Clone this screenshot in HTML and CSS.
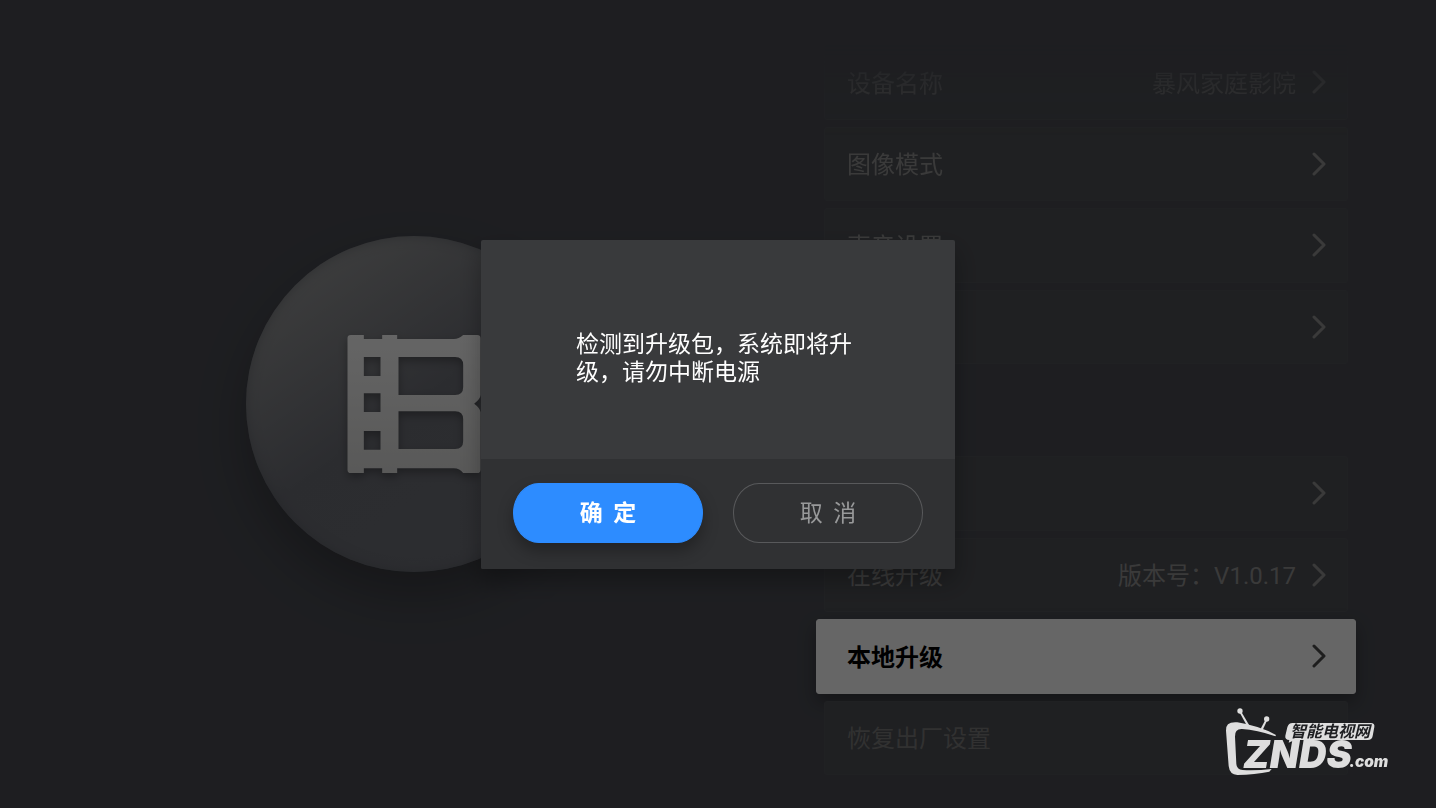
FILE: index.html
```html
<!DOCTYPE html>
<html lang="zh-CN">

<head>
    <meta charset="UTF-8">
    <meta name="viewport" content="width=device-width, initial-scale=1.0">
    <title>系统设置</title>
    <link rel="stylesheet" href="styles.css">
</head>

<body>
    <svg class="symbols" aria-hidden="true">
        <symbol id="arrow" viewBox="0 0 14 24">
            <path d="M2 2 L12 12 L2 22" fill="none" stroke="currentColor" stroke-width="3" stroke-linecap="round" stroke-linejoin="round"/>
        </symbol>
    </svg>

    <main class="screen">
        <div class="emblem-area">
            <div class="emblem">
                <svg class="emblem-icon" viewBox="51 48 399 414" aria-hidden="true">
                    <defs>
                        <linearGradient id="metal" x1="0" y1="0" x2="0" y2="1">
                            <stop offset="0" stop-color="#fcfcfc"/>
                            <stop offset="1" stop-color="#dededd"/>
                        </linearGradient>
                    </defs>
                    <path fill="url(#metal)" fill-rule="evenodd" d="M61 48H100V60H155V48H200V60H370Q385 60 398 48H440Q450 48 450 58V228Q450 240 431 254Q450 268 450 280V452Q450 462 440 462H398Q388 448 370 448H200V462H155V448H100V462H61Q51 462 51 452V58Q51 48 61 48Z
                        M100 114V171H150V114Z M100 223V279H150V223Z M100 336V392H150V336Z
                        M204 114V228H374Q398 228 398 204V138Q398 114 374 114Z
                        M204 277V390H374Q398 390 398 366V301Q398 277 374 277Z"/>
                </svg>
            </div>
        </div>

        <div class="settings">
            <div class="group">
                <button class="item"><span>设备名称</span><span class="value">暴风家庭影院</span><svg class="arrow"><use href="#arrow"/></svg></button>
                <button class="item"><span>图像模式</span><svg class="arrow"><use href="#arrow"/></svg></button>
                <button class="item"><span>声音设置</span><svg class="arrow"><use href="#arrow"/></svg></button>
                <button class="item" aria-label="更多"><svg class="arrow"><use href="#arrow"/></svg></button>
            </div>
            <div class="group">
                <button class="item" aria-label="更多"><svg class="arrow"><use href="#arrow"/></svg></button>
                <button class="item"><span>在线升级</span><span class="value">版本号：V1.0.17</span><svg class="arrow"><use href="#arrow"/></svg></button>
                <button class="item active"><span>本地升级</span><svg class="arrow"><use href="#arrow"/></svg></button>
                <button class="item last"><span>恢复出厂设置</span></button>
            </div>
        </div>
    </main>

    <div class="overlay">
        <div class="dialog" role="dialog" aria-modal="true" aria-labelledby="message">
            <div class="dialog-body">
                <p id="message">检测到升级包，系统即将升级，请勿中断电源</p>
            </div>
            <div class="dialog-footer">
                <button class="btn btn-ok">确&nbsp;&nbsp;定</button>
                <button class="btn btn-cancel">取&nbsp;&nbsp;消</button>
            </div>
        </div>
    </div>

    <svg class="watermark" viewBox="72 51 498 207" role="img" aria-label="智能电视网 ZNDS.com">
        <g fill="#dedede">
            <circle cx="120" cy="63" r="8"/>
            <circle cx="200" cy="87" r="8"/>
            <path d="M118 66L123 64L149 108L140 106Z"/>
            <path d="M197 88L202 90L189 118L182 116Z"/>
            <path d="M228 135Q180 108 112 97Q76 94 78 122L86 228Q89 254 112 255Q165 254 208 245L215 237Q170 242 128 240Q110 239 109 222L105 140Q104 116 126 117Q170 119 226 139Z"/>
            <path d="M278 99H512Q525 99 523 111L518 138Q516 150 503 150H284L266 158L268 150Q254 149 256 137L262 112Q265 99 278 99Z"/>
            <text class="mark-name" x="130" y="233">ZNDS</text>
            <text class="mark-com" x="448" y="232">.com</text>
        </g>
        <text class="mark-cn" x="270" y="141">智能电视网</text>
    </svg>
</body>

</html>
```
FILE: styles.css
```css
* {
  box-sizing: border-box;
}
body {
  margin: 0;
  background-color: #4b4d54;
  font-family: Roboto, "Noto Sans CJK SC", sans-serif;
}
button {
  font-family: inherit;
  cursor: pointer;
}
.symbols {
  display: none;
}

/* main screen */
.screen {
  display: flex;
  min-height: 100vh;
  padding: 0 88px 0 4px;
}
.emblem-area {
  flex: 1;
  display: flex;
  align-items: center;
  justify-content: center;
}
.emblem {
  display: flex;
  align-items: center;
  justify-content: center;
  width: 336px;
  height: 336px;
  border-radius: 50%;
  background: linear-gradient(145deg, #98999a 12%, #6d6f77 50%, #70727a 100%);
  box-shadow: 0 24px 48px rgba(0, 0, 0, 0.25), inset 0 0 12px rgba(80, 84, 92, 0.5);
}
.emblem-icon {
  width: 134px;
  height: 138px;
  filter: drop-shadow(0 4px 4px rgba(0, 0, 0, 0.3));
}
.settings {
  display: flex;
  flex-direction: column;
  gap: 92px;
  width: 524px;
  padding-top: 45px;
}
.group {
  display: grid;
  grid-auto-rows: 1fr;
  gap: 7px;
  height: 319px;
}
.group:first-child {
  mask-image: linear-gradient(transparent, rgba(0, 0, 0, 0.4) 40px, #000 90px);
}
.item {
  display: flex;
  align-items: center;
  padding: 0 21px 0 22px;
  border: 1px solid #525459;
  border-radius: 3px;
  background-color: #4e5055;
  color: #929292;
  font-size: 24px;
}
.item span {
  padding-bottom: 2px;
}
.item .value {
  margin-left: auto;
}
.arrow {
  width: 14px;
  height: 24px;
  margin-left: auto;
}
.value + .arrow {
  margin-left: 16px;
}
.item.active {
  margin: 0 -8px;
  padding: 0 29px 0 30px;
  border-color: #fff;
  background-color: #fff;
  color: #000;
  font-weight: bold;
  box-shadow: 0 8px 18px rgba(0, 0, 0, 0.3);
}
.active .arrow {
  color: #4c4c4c;
}
.item.last {
  color: #7c7c7c;
}

/* upgrade dialog */
.overlay {
  position: fixed;
  inset: 0;
  display: flex;
  align-items: center;
  justify-content: center;
  background-color: rgba(0, 0, 0, 0.6);
}
.dialog {
  width: 474px;
  border-radius: 2px;
  overflow: hidden;
  background-color: #393a3c;
  box-shadow: 0 12px 24px rgba(0, 0, 0, 0.3);
}
.dialog-body {
  padding: 91px 95px 72px;
}
.dialog-body p {
  margin: 0;
  color: #fff;
  font-size: 23px;
  line-height: 28px;
}
.dialog-footer {
  display: flex;
  gap: 30px;
  padding: 24px 32px 26px;
  background-color: #303133;
}
.btn {
  flex: 1 1 0;
  height: 60px;
  padding: 0 0 4px;
  border: 1px solid transparent;
  border-radius: 26px / 30px;
  font-family: "Noto Sans CJK SC", sans-serif;
  font-size: 23px;
}
.btn-ok {
  border-color: #2d8cff;
  background-color: #2d8cff;
  color: #fff;
  font-weight: bold;
  box-shadow: 0 8px 16px rgba(0, 0, 0, 0.3);
}
.btn-cancel {
  border-color: #58595b;
  background-color: transparent;
  color: #98999a;
}

/* site mark in the corner */
.watermark {
  position: fixed;
  right: 46px;
  bottom: 32px;
  width: 166px;
  height: 69px;
}
.watermark text {
  font-family: Inter, "Noto Sans CJK SC", sans-serif;
  font-style: italic;
  font-weight: 900;
}
.mark-name {
  font-size: 114px;
}
.mark-com {
  font-size: 46px;
}
.watermark .mark-cn {
  fill: #1e1f22;
  font-size: 48px;
  font-weight: bold;
}
```
